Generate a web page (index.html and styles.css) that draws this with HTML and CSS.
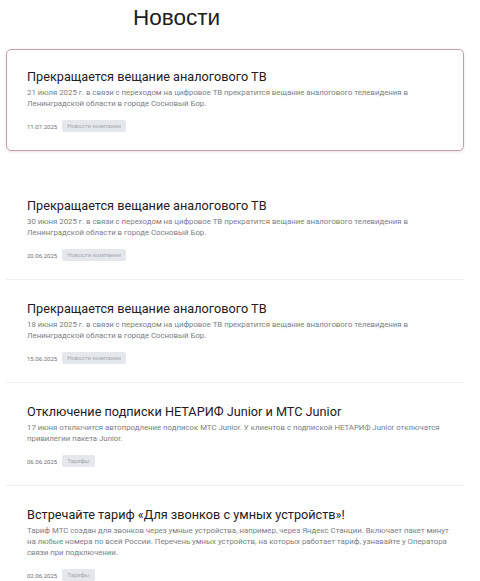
FILE: index.html
```html
<!DOCTYPE html>
<html lang="ru">
<head>
    <meta charset="UTF-8">
    <meta name="viewport" content="width=device-width, initial-scale=1.0">
    <title>Новости</title>
    <link rel="stylesheet" href="styles.css">
</head>
<body>
    <h1 class="page-title">Новости</h1>

    <div class="news-list">
        <div class="news-item news-item-active">
            <h2 class="news-title">Прекращается вещание аналогового ТВ</h2>
            <p class="news-text">21 июля 2025 г. в связи с переходом на цифровое ТВ прекратится вещание аналогового телевидения в Ленинградской области в городе Сосновый Бор.</p>
            <div class="news-meta">
                <span class="news-date">11.07.2025</span>
                <span class="news-tag">Новости компании</span>
            </div>
        </div>

        <div class="news-item">
            <h2 class="news-title">Прекращается вещание аналогового ТВ</h2>
            <p class="news-text">30 июня 2025 г. в связи с переходом на цифровое ТВ прекратится вещание аналогового телевидения в Ленинградской области в городе Сосновый Бор.</p>
            <div class="news-meta">
                <span class="news-date">20.06.2025</span>
                <span class="news-tag">Новости компании</span>
            </div>
        </div>

        <div class="news-item">
            <h2 class="news-title">Прекращается вещание аналогового ТВ</h2>
            <p class="news-text">18 июня 2025 г. в связи с переходом на цифровое ТВ прекратится вещание аналогового телевидения в Ленинградской области в городе Сосновый Бор.</p>
            <div class="news-meta">
                <span class="news-date">15.06.2025</span>
                <span class="news-tag">Новости компании</span>
            </div>
        </div>

        <div class="news-item">
            <h2 class="news-title">Отключение подписки НЕТАРИФ Junior и МТС Junior</h2>
            <p class="news-text">17 июня отключится автопродление подписок МТС Junior. У клиентов с подпиской НЕТАРИФ Junior отключатся привилегии пакета Junior.</p>
            <div class="news-meta">
                <span class="news-date">06.06.2025</span>
                <span class="news-tag">Тарифы</span>
            </div>
        </div>

        <div class="news-item">
            <h2 class="news-title">Встречайте тариф «Для звонков с умных устройств»!</h2>
            <p class="news-text">Тариф МТС создан для звонков через умные устройства, например, через Яндекс Станции. Включает пакет минут на любые номера по всей России. Перечень умных устройств, на которых работает тариф, узнавайте у Оператора связи при подключении.</p>
            <div class="news-meta">
                <span class="news-date">02.06.2025</span>
                <span class="news-tag">Тарифы</span>
            </div>
        </div>
    </div>
</body>
</html>
```

FILE: styles.css
```css
body {
    margin: 0;
    font-family: 'Roboto', 'Noto Sans', sans-serif;
    background: #fff;
    color: #1d2023;
}
.page-title {
    margin: 4px 0 17px 133px;
    font-family: 'Liberation Sans', Arial, sans-serif;
    font-size: 22.5px;
    font-weight: normal;
    line-height: 28px;
    color: #1d2023;
}
.news-list {
    width: 458px;
    margin-left: 6px;
}
.news-item {
    padding: 19px 6px 18px 21px;
    border-bottom: 1px solid #eceef0;
}
.news-item-active {
    padding: 17px 6px 18px 20px;
    margin-bottom: 26px;
    border: 1px solid #c99aac;
    border-radius: 5px;
    box-shadow: 0 1px 3px rgba(120, 60, 90, 0.15);
}
.news-title {
    margin: 0;
    font-size: 12.7px;
    font-weight: normal;
    line-height: 20px;
    color: #1d2023;
}
.news-text {
    margin: 0;
    font-size: 7.8px;
    line-height: 11px;
    color: #7a7e84;
}
.news-meta {
    display: flex;
    align-items: center;
    gap: 5px;
    margin-top: 11px;
}
.news-date {
    font-size: 6px;
    color: #6c7075;
}
.news-tag {
    padding: 2px 5px;
    font-size: 6px;
    line-height: 8px;
    color: #a4a9b0;
    background: #e4e7ec;
    border-radius: 2px;
}
```
